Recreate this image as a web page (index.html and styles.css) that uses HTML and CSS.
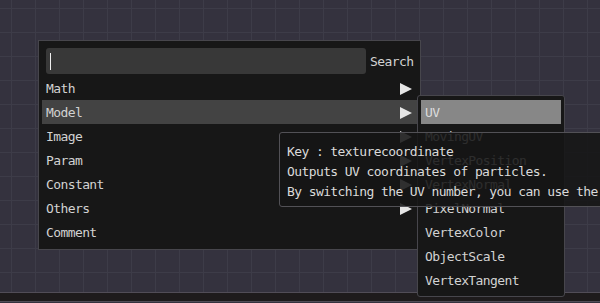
FILE: index.html
```html
<!DOCTYPE html>
<html lang="en">
<head>
    <meta charset="UTF-8">
    <meta name="viewport" content="width=device-width, initial-scale=1.0">
    <title>Node Search</title>
    <link rel="stylesheet" href="styles.css">
</head>
<body>
    <div class="canvas">
        <div class="menu">
            <div class="search-row">
                <div class="search-box"><span class="caret"></span></div>
                <span class="search-label">Search</span>
            </div>
            <ul class="items">
                <li><span>Math</span><i class="arrow"></i></li>
                <li class="active"><span>Model</span><i class="arrow"></i></li>
                <li><span>Image</span><i class="arrow"></i></li>
                <li><span>Param</span><i class="arrow"></i></li>
                <li><span>Constant</span><i class="arrow"></i></li>
                <li><span>Others</span><i class="arrow"></i></li>
                <li><span>Comment</span></li>
            </ul>
        </div>

        <div class="submenu">
            <ul class="items">
                <li class="selected">UV</li>
                <li>MovingUV</li>
                <li>VertexPosition</li>
                <li>VertexNormal</li>
                <li>PixelNormal</li>
                <li>VertexColor</li>
                <li>ObjectScale</li>
                <li>VertexTangent</li>
            </ul>
        </div>

        <div class="tooltip">
            <p>Key : texturecoordinate</p>
            <p>Outputs UV coordinates of particles.</p>
            <p>By switching the UV number, you can use the</p>
        </div>
    </div>
    <div class="footer"></div>
</body>
</html>
```

FILE: styles.css
```css
body {
    margin: 0;
    width: 600px;
    height: 303px;
    overflow: hidden;
    display: flex;
    flex-direction: column;
    background-color: #34323e;
    font-family: "DejaVu Sans Mono", "Liberation Mono", monospace;
    font-size: 13px;
    letter-spacing: -0.6px;
    color: #d2d2d2;
}

.canvas {
    position: relative;
    height: 292px;
    background-color: #34323e;
    background-image:
        linear-gradient(to right, #3d3c48 1px, transparent 1px),
        linear-gradient(to bottom, #3d3c48 1px, transparent 1px);
    background-size: 24px 24px;
    background-position: 11px 8px;
}

.footer {
    height: 8px;
    background-color: #1e1b1c;
    border-top: 1px solid #514d57;
    border-bottom: 1px solid #514d57;
}

ul.items {
    list-style-type: none;
    margin: 0;
    padding: 0;
}

/* main popup */
.menu {
    position: absolute;
    left: 38px;
    top: 40px;
    width: 381px;
    height: 208px;
    background-color: #171717;
    border: 1px solid #47464c;
}

.search-row {
    display: flex;
    align-items: center;
    margin: 7px 0 2px 7px;
}

.search-box {
    width: 320px;
    height: 26px;
    background-color: #383838;
    border-radius: 3px;
    display: flex;
    align-items: center;
}

.caret {
    display: block;
    width: 1px;
    height: 17px;
    margin-left: 4px;
    background-color: #eeeeee;
}

.search-label {
    margin-left: 4px;
    padding-top: 1px;
}

.menu .items {
    padding: 0 3px;
}

.items li {
    box-sizing: border-box;
    height: 24px;
    line-height: 20px;
    padding: 2px 0 0 4px;
    display: flex;
    align-items: center;
    justify-content: space-between;
    white-space: nowrap;
}

.menu .items li.active {
    background-color: #434343;
}

.arrow {
    display: block;
    width: 0;
    height: 0;
    margin-right: 5px;
    border-left: 12px solid #e6e6e6;
    border-top: 6.5px solid transparent;
    border-bottom: 6.5px solid transparent;
}

/* sub popup */
.submenu {
    position: absolute;
    left: 417px;
    top: 95px;
    width: 140px;
    padding: 4px 3px;
    background-color: #171717;
    border: 1px solid #47464c;
    border-radius: 3px;
}

.submenu .items li.selected {
    background-color: #878787;
    color: #dcdcdc;
}

/* hover help */
.tooltip {
    position: absolute;
    left: 279px;
    top: 132px;
    width: 420px;
    padding: 9px 7px 4px;
    background-color: rgba(22, 22, 22, 0.88);
    border: 1px solid #525156;
    border-radius: 3px;
    white-space: nowrap;
    color: #dadada;
}

.tooltip p {
    margin: 0;
    line-height: 20px;
}
```
